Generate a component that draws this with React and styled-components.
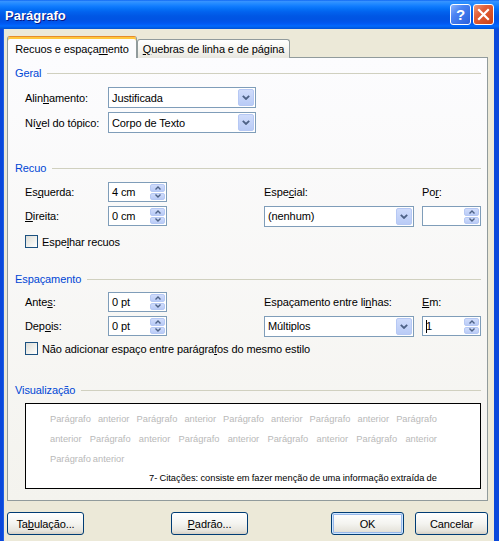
import React from "react";
import styled, { createGlobalStyle } from "styled-components";

const Global = createGlobalStyle`
  html, body { margin: 0; padding: 0; overflow: hidden; background: #ECE9D8; }
  body { font-family: "Liberation Sans", Arial, sans-serif; font-size: 11px; color: #000; letter-spacing: -0.1px; }
  * { box-sizing: border-box; }
`;

const Win = styled.div`
  width: 499px;
  height: 541px;
  display: flex;
  flex-direction: column;
`;

const TitleBar = styled.div`
  height: 29px;
  flex: none;
  display: flex;
  align-items: center;
  padding: 0 5px 0 5px;
  background: linear-gradient(
    to bottom,
    #0058ee 0px,
    #3a93ff 1px,
    #288eff 3px,
    #127dff 6px,
    #0470f6 9px,
    #0262ee 12px,
    #0057e5 16px,
    #0054e3 19px,
    #0055eb 22px,
    #005bf5 24px,
    #026afe 26px,
    #0062ef 27px,
    #0052d6 29px
  );
`;

const Title = styled.div`
  flex: 1;
  color: #fff;
  font-weight: bold;
  font-size: 13px;
  letter-spacing: 0;
  padding-top: 2px;
  text-shadow: 1px 1px 0 #0a1883;
`;

const CapBtn = styled.div`
  width: 21px;
  height: 21px;
  margin-left: 2px;
  border: 1px solid #fff;
  border-radius: 3px;
  display: flex;
  align-items: center;
  justify-content: center;
  color: #fff;
  font-weight: bold;
  font-size: 15px;
  background: ${(p) =>
    p.$close
      ? "linear-gradient(135deg, #ef9a7c 0%, #e2603a 35%, #cc4013 100%)"
      : "linear-gradient(135deg, #8fb4fc 0%, #4a84f3 35%, #2a5fdc 100%)"};
`;

const Body = styled.div`
  flex: 1;
  display: flex;
  flex-direction: column;
  background: #ece9d8;
  border-left: 3px solid #0a48db;
  border-right: 5px solid #0a48db;
  box-shadow: inset 1px 0 0 #1d5ee6;
  padding: 7px 6px 0 4px;
`;

const TabStrip = styled.div`
  height: 22px;
  display: flex;
  align-items: flex-end;
  margin-bottom: -1px;
  position: relative;
  z-index: 1;
`;

const Tab = styled.div`
  display: flex;
  align-items: center;
  justify-content: center;
  white-space: nowrap;
  border: 1px solid #919b9c;
  border-radius: 3px 3px 0 0;
  ${(p) =>
    p.$active
      ? `
    width: 130px;
    height: 22px;
    border-bottom: none;
    border-top: 1px solid #e68b2c;
    box-shadow: inset 0 2px 0 #ffc73c;
    background: #fcfcfe;
    padding-top: 2px;
  `
      : `
    width: 153px;
    height: 19px;
    border-bottom: none;
    background: linear-gradient(#ffffff, #f4f3ee 60%, #e7e6df);
  `}
`;

const Panel = styled.div`
  height: 444px;
  border: 1px solid #919b9c;
  background: linear-gradient(#fcfcfe, #f4f3ee);
  padding: 0 5px 0 7px;
  display: flex;
  flex-direction: column;
`;

const Legend = styled.div`
  display: flex;
  align-items: center;
  height: 14px;
  margin-top: ${(p) => p.$mt}px;
  margin-right: 1px;
  color: #0046d5;
  &::after {
    content: "";
    flex: 1;
    height: 1px;
    margin-left: 6px;
    background: #d0d0bf;
  }
`;

const Grid = styled.div`
  display: grid;
  grid-template-columns: ${(p) => p.$cols};
  grid-auto-rows: ${(p) => p.$rh}px;
  row-gap: 4px;
  margin: ${(p) => p.$mt}px 0 0 10px;
  align-items: center;
`;

const Label = styled.div`
  white-space: nowrap;
  grid-column: ${(p) => p.$col || "auto"};
`;

const Combo = styled.div`
  grid-column: ${(p) => p.$col || "auto"};
  width: ${(p) => p.$w}px;
  height: 21px;
  border: 1px solid #7f9db9;
  background: #fff;
  display: flex;
`;

const FieldText = styled.div`
  flex: 1;
  display: flex;
  align-items: center;
  padding-left: 3px;
  white-space: nowrap;
`;

const ComboBtn = styled.div`
  width: 16px;
  margin: 1px 1px 1px 0;
  border: 1px solid #b6c8f4;
  border-radius: 2px;
  background: linear-gradient(#d0dcfb, #b9cbf6);
  display: flex;
  align-items: center;
  justify-content: center;
`;

const Spin = styled.div`
  grid-column: ${(p) => p.$col || "auto"};
  width: 59px;
  height: 20px;
  border: 1px solid #7f9db9;
  background: #fff;
  display: flex;
`;

const SpinBtns = styled.div`
  width: 15px;
  margin: 1px 1px 1px 0;
  display: flex;
  flex-direction: column;
  gap: 1px;
`;

const SpinBtn = styled.div`
  flex: 1;
  border: 1px solid #b6c8f4;
  border-radius: 2px;
  background: linear-gradient(#d0dcfb, #b9cbf6);
  display: flex;
  align-items: center;
  justify-content: center;
`;

const Caret = styled.span`
  display: inline-block;
  width: 1px;
  height: 13px;
  background: #000;
  margin-right: -1px;
`;

const CheckRow = styled.div`
  display: flex;
  align-items: center;
  gap: 4px;
  height: 13px;
  margin: ${(p) => p.$mt}px 0 0 10px;
  white-space: nowrap;
`;

const Box = styled.div`
  width: 13px;
  height: 13px;
  border: 1px solid #1c5180;
  background: linear-gradient(135deg, #dcdcd7 0%, #f2f2ee 60%, #ffffff 100%);
`;

const Preview = styled.div`
  width: 456px;
  height: 86px;
  margin: 6px 0 0 10px;
  border: 1px solid #000;
  background: #fff;
  overflow: hidden;
  padding: 5px 0 0 24px;
  font-size: 9.3px;
  letter-spacing: 0;
`;

const PrevLine = styled.div`
  width: ${(p) => p.$w || 387}px;
  height: ${(p) => p.$h || 20}px;
  margin-left: ${(p) => p.$ml || 0}px;
  display: flex;
  align-items: center;
  justify-content: ${(p) => (p.$left ? "flex-start" : "space-between")};
  gap: ${(p) => (p.$left ? "2px" : "0")};
  color: ${(p) => (p.$dark ? "#000" : "#b9b9b9")};
  white-space: nowrap;
`;

const ButtonRow = styled.div`
  display: flex;
  margin-top: 11px;
  height: 23px;
`;

const Button = styled.div`
  width: ${(p) => p.$w}px;
  height: 23px;
  margin-left: ${(p) => (p.$ml === "auto" ? "auto" : `${p.$ml || 0}px`)};
  border: 1px solid #003c74;
  border-radius: 3px;
  display: flex;
  align-items: center;
  justify-content: center;
  background: linear-gradient(#ffffff, #f4f4f0 50%, #e6e4dc 85%, #d6d0c5);
  box-shadow: ${(p) =>
    p.$default
      ? "inset 0 0 0 1px #cee7ff, inset 0 0 0 2px #98b8ea"
      : "none"};
`;

const Chevron = () => (
  <svg width="8" height="5" viewBox="0 0 8 5">
    <path d="M0.8 0.8 L4 4 L7.2 0.8" fill="none" stroke="#4d6185" strokeWidth="1.8" />
  </svg>
);

const Arrow = ({ up }) => (
  <svg width="6" height="4" viewBox="0 0 6 4">
    <path
      d={up ? "M0.5 3.5 L3 1 L5.5 3.5" : "M0.5 0.5 L3 3 L5.5 0.5"}
      fill="none"
      stroke="#4d6185"
      strokeWidth="1.4"
    />
  </svg>
);

const ComboField = ({ w, col, children }) => (
  <Combo $w={w} $col={col}>
    <FieldText>{children}</FieldText>
    <ComboBtn>
      <Chevron />
    </ComboBtn>
  </Combo>
);

const SpinField = ({ col, children }) => (
  <Spin $col={col}>
    <FieldText>{children}</FieldText>
    <SpinBtns>
      <SpinBtn>
        <Arrow up />
      </SpinBtn>
      <SpinBtn>
        <Arrow />
      </SpinBtn>
    </SpinBtns>
  </Spin>
);

const Words = ({ text, ...rest }) => (
  <PrevLine {...rest}>
    {text.split(" ").map((w, i) => (
      <span key={i}>{w}</span>
    ))}
  </PrevLine>
);

const COLS = "83px 59px 97px 158px 59px";

export default function App() {
  return (
    <Win>
      <Global />
      <TitleBar>
        <Title>Parágrafo</Title>
        <CapBtn>?</CapBtn>
        <CapBtn $close>
          <svg width="13" height="13" viewBox="0 0 13 13">
            <path d="M2 2 L11 11 M11 2 L2 11" stroke="#fff" strokeWidth="2.2" strokeLinecap="square" />
          </svg>
        </CapBtn>
      </TitleBar>
      <Body>
        <TabStrip>
          <Tab $active>
            Recuos e espaça<u>m</u>ento
          </Tab>
          <Tab>
            <u>Q</u>uebras de linha e de página
          </Tab>
        </TabStrip>
        <Panel>
          <Legend $mt={8}>Geral</Legend>
          <Grid $cols="83px 148px" $rh={21} $mt={7}>
            <Label>
              Alin<u>h</u>amento:
            </Label>
            <ComboField w={148}>Justificada</ComboField>
            <Label>
              Ní<u>v</u>el do tópico:
            </Label>
            <ComboField w={148}>Corpo de Texto</ComboField>
          </Grid>

          <Legend $mt={28}>Recuo</Legend>
          <Grid $cols={COLS} $rh={20} $mt={7}>
            <Label>
              Es<u>q</u>uerda:
            </Label>
            <SpinField>4 cm</SpinField>
            <Label $col="4">
              Espe<u>c</u>ial:
            </Label>
            <Label $col="5">
              Po<u>r</u>:
            </Label>
            <Label>
              <u>D</u>ireita:
            </Label>
            <SpinField>0 cm</SpinField>
            <ComboField w={150} col="4">
              (nenhum)
            </ComboField>
            <SpinField col="5"></SpinField>
          </Grid>
          <CheckRow $mt={9}>
            <Box />
            <span>
              Espe<u>l</u>har recuos
            </span>
          </CheckRow>

          <Legend $mt={24}>Espaçamento</Legend>
          <Grid $cols={COLS} $rh={20} $mt={6}>
            <Label>
              Ante<u>s</u>:
            </Label>
            <SpinField>0 pt</SpinField>
            <Label $col="4">
              Espaçamento entre li<u>n</u>has:
            </Label>
            <Label $col="5">
              <u>E</u>m:
            </Label>
            <Label>
              Dep<u>o</u>is:
            </Label>
            <SpinField>0 pt</SpinField>
            <ComboField w={150} col="4">
              Múltiplos
            </ComboField>
            <SpinField col="5">
              <Caret />1
            </SpinField>
          </Grid>
          <CheckRow $mt={6}>
            <Box />
            <span>
              Não adicionar espaço entre parágra<u>f</u>os do mesmo estilo
            </span>
          </CheckRow>

          <Legend $mt={28}>Visualização</Legend>
          <Preview>
            <Words text="Parágrafo anterior Parágrafo anterior Parágrafo anterior Parágrafo anterior Parágrafo" />
            <Words text="anterior Parágrafo anterior Parágrafo anterior Parágrafo anterior Parágrafo anterior" />
            <Words $left text="Parágrafo anterior" />
            <Words
              $dark
              $h={18}
              $w={288}
              $ml={99}
              text="7- Citações: consiste em fazer menção de uma informação extraída de"
            />
          </Preview>
        </Panel>
        <ButtonRow>
          <Button $w={77}>
            Ta<u>b</u>ulação...
          </Button>
          <Button $w={77} $ml={87}>
            <u>P</u>adrão...
          </Button>
          <Button $w={73} $ml="auto" $default>
            OK
          </Button>
          <Button $w={73} $ml={11}>
            Cancelar
          </Button>
        </ButtonRow>
      </Body>
    </Win>
  );
}
